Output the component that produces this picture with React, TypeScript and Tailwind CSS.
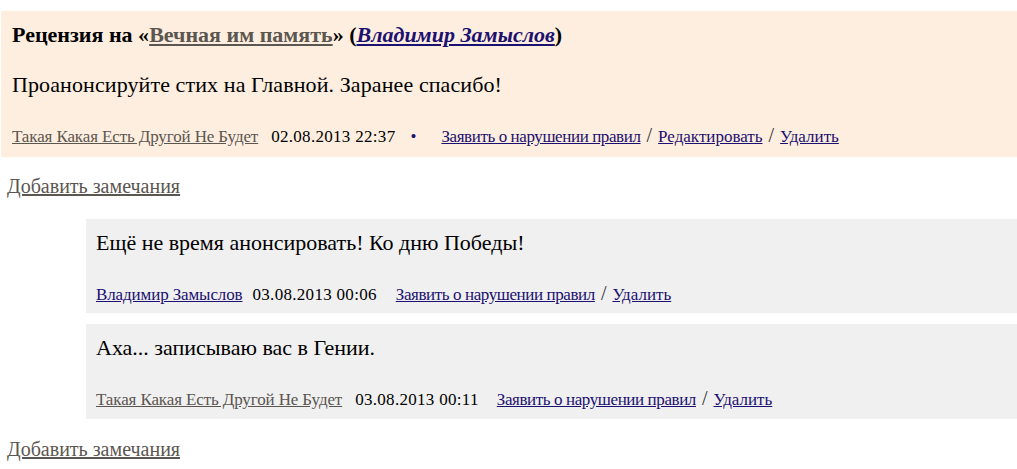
import React from "react";

const navy = "text-[#1c1070]";
const gray = "text-[#5b5650]";

function Sep() {
  return <span className="mx-[6px] text-[20px] text-[#333]">/</span>;
}

export default function App() {
  return (
    <div className="w-[1017px] h-[469px] overflow-hidden bg-white text-black" style={{ fontFamily: '"Liberation Serif", "Times New Roman", serif' }}>
      <div className="pt-[11px]">
        <div className="ml-[1px] h-[146px] bg-[#fdeedf] pl-[11px] pt-[10px]">
          <div className="text-[22px] font-bold leading-[28px]">
            Рецензия на «<a className={`${gray} underline`}>Вечная им память</a>» (<a className={`${navy} italic underline`}>Владимир Замыслов</a>)
          </div>
          <div className="mt-[22px] text-[22px] leading-[28px] tracking-[0.1px]">Проанонсируйте стих на Главной. Заранее спасибо!</div>
          <div className="mt-[22px] flex items-baseline text-[17px] leading-[28px]">
            <a className={`${gray} underline tracking-[-0.12px]`}>Такая Какая Есть Другой Не Будет</a>
            <span className="ml-[13px] tracking-[0.3px]">02.08.2013 22:37</span>
            <span className={`ml-[15px] ${navy}`}>•</span>
            <a className={`ml-[25px] ${navy} underline tracking-[-0.4px]`}>Заявить о нарушении правил</a>
            <Sep />
            <a className={`${navy} underline`}>Редактировать</a>
            <Sep />
            <a className={`${navy} underline`}>Удалить</a>
          </div>
        </div>
        <div className="mt-[17px] pl-[7px] text-[20px] leading-[24px]">
          <a className={`${gray} underline`}>Добавить замечания</a>
        </div>
        <div className="mt-[21px] ml-[86px] flex flex-col gap-[11px]">
          <div className="h-[94px] bg-[#f0f0f0] pl-[10px] pt-[10px]">
            <div className="text-[22px] leading-[28px]">Ещё не время анонсировать! Ко дню Победы!</div>
            <div className="mt-[22px] flex items-baseline text-[17px] leading-[28px]">
              <a className={`${navy} underline tracking-[-0.12px]`}>Владимир Замыслов</a>
              <span className="ml-[10px] tracking-[0.3px]">03.08.2013 00:06</span>
              <a className={`ml-[19px] ${navy} underline tracking-[-0.4px]`}>Заявить о нарушении правил</a>
              <Sep />
              <a className={`${navy} underline`}>Удалить</a>
            </div>
          </div>
          <div className="h-[95px] bg-[#f0f0f0] pl-[10px] pt-[10px]">
            <div className="text-[22px] leading-[28px]">Аха... записываю вас в Гении.</div>
            <div className="mt-[22px] flex items-baseline text-[17px] leading-[28px]">
              <a className={`${gray} underline tracking-[-0.12px]`}>Такая Какая Есть Другой Не Будет</a>
              <span className="ml-[13px] tracking-[0.3px]">03.08.2013 00:11</span>
              <a className={`ml-[18px] ${navy} underline tracking-[-0.4px]`}>Заявить о нарушении правил</a>
              <Sep />
              <a className={`${navy} underline`}>Удалить</a>
            </div>
          </div>
        </div>
        <div className="mt-[18px] pl-[7px] text-[20px] leading-[24px]">
          <a className={`${gray} underline`}>Добавить замечания</a>
        </div>
      </div>
    </div>
  );
}
